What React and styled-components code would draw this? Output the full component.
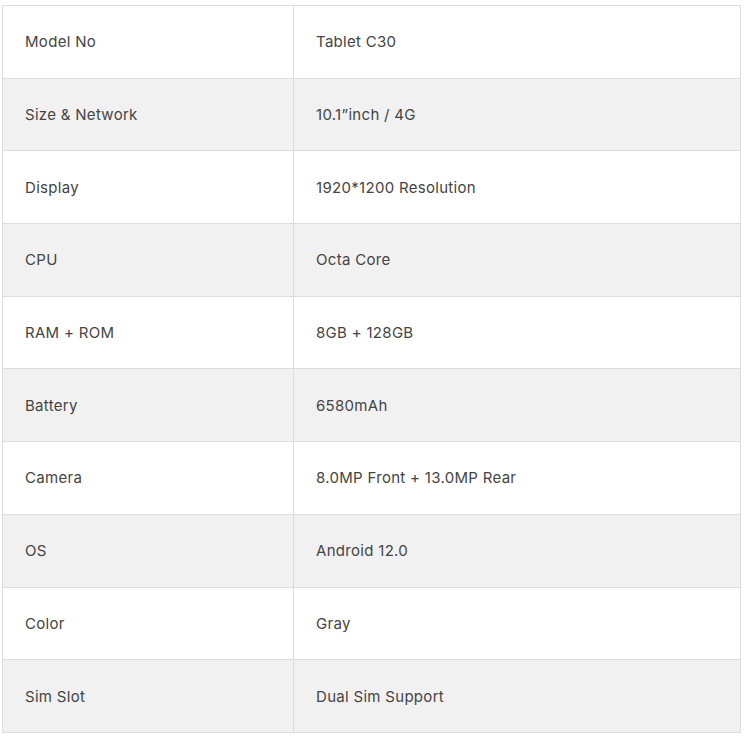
import React from "react";
import styled, { createGlobalStyle } from "styled-components";

const GlobalStyle = createGlobalStyle`
  body {
    margin: 0;
    background: #ffffff;
    font-family: "Inter", "Noto Sans", sans-serif;
  }
`;

const Root = styled.div`
  padding: 5px 0 0 2px;
`;

const SpecTable = styled.table`
  width: 739px;
  border-collapse: collapse;
  border: 1px solid #dcdcdc;
`;

const Row = styled.tr`
  height: 72.7px;
  background: ${(p) => (p.$shaded ? "#f1f1f1" : "#ffffff")};
`;

const Cell = styled.td`
  border: 1px solid #dcdcdc;
  padding: 0 22px;
  font-size: 15px;
  letter-spacing: 0.3px;
  color: #444444;
  vertical-align: middle;
  width: ${(p) => (p.$label ? "246px" : "auto")};
`;

const specs = [
  ["Model No", "Tablet C30"],
  ["Size & Network", "10.1\u201dinch / 4G"],
  ["Display", "1920*1200 Resolution"],
  ["CPU", "Octa Core"],
  ["RAM + ROM", "8GB + 128GB"],
  ["Battery", "6580mAh"],
  ["Camera", "8.0MP Front + 13.0MP Rear"],
  ["OS", "Android 12.0"],
  ["Color", "Gray"],
  ["Sim Slot", "Dual Sim Support"],
];

export default function App() {
  return (
    <Root>
      <GlobalStyle />
      <SpecTable>
        <tbody>
          {specs.map(([label, value], i) => (
            <Row key={label} $shaded={i % 2 === 1}>
              <Cell $label>{label}</Cell>
              <Cell>{value}</Cell>
            </Row>
          ))}
        </tbody>
      </SpecTable>
    </Root>
  );
}
